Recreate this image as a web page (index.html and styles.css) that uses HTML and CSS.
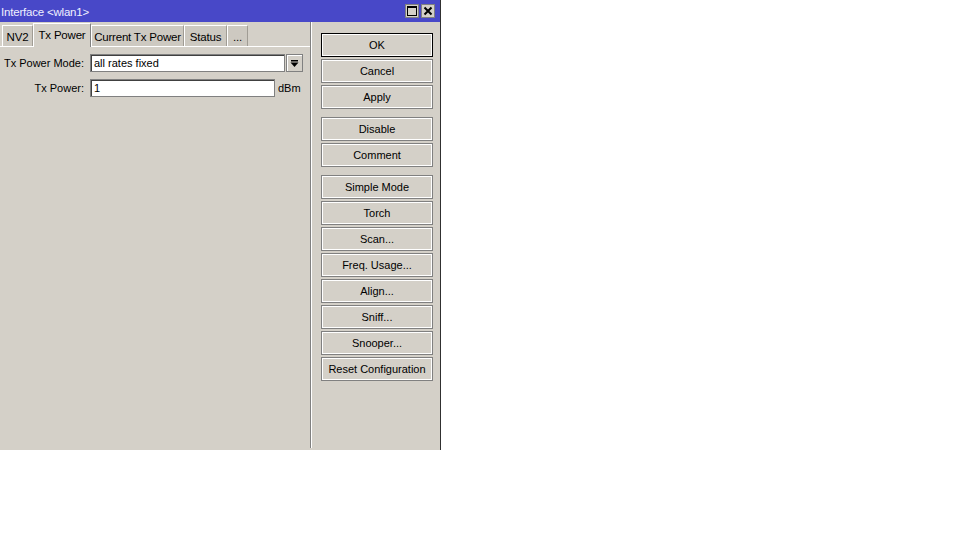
FILE: index.html
```html
<!DOCTYPE html>
<html>
<head>
<meta charset="utf-8">
<link rel="stylesheet" href="styles.css">
</head>
<body>
<div class="window">
  <div class="titlebar">
    <span class="title">Interface &lt;wlan1&gt;</span>
    <div class="tb-buttons">
      <span class="tb-btn"><svg width="10" height="10" viewBox="0 0 10 10"><rect x="0.5" y="0.5" width="9" height="9" fill="none" stroke="#000"/><rect x="0" y="0" width="10" height="2" fill="#000"/></svg></span>
      <span class="tb-btn"><svg width="10" height="10" viewBox="0 0 10 10"><path d="M1.5 1.5 L8.5 8.5 M8.5 1.5 L1.5 8.5" stroke="#000" stroke-width="2"/></svg></span>
    </div>
  </div>
  <div class="body">
    <div class="main">
      <div class="tabs">
        <span class="tab t1">NV2</span>
        <span class="tab t2 active">Tx Power</span>
        <span class="tab t3">Current Tx Power</span>
        <span class="tab t4">Status</span>
        <span class="tab t5">...</span>
      </div>
      <div class="panel">
        <div class="row">
          <span class="label">Tx Power Mode:</span>
          <span class="field wide">all rates fixed</span>
          <span class="dd"><svg width="9" height="9" viewBox="0 0 9 9"><rect x="1" y="1" width="7" height="1.5" fill="#000"/><path d="M0.5 3.5 H8.5 L4.5 8 Z" fill="#000"/></svg></span>
        </div>
        <div class="row">
          <span class="label">Tx Power:</span>
          <span class="field narrow">1</span>
          <span class="unit">dBm</span>
        </div>
      </div>
    </div>
    <div class="side">
      <div class="group">
        <button class="btn default">OK</button>
        <button class="btn">Cancel</button>
        <button class="btn">Apply</button>
      </div>
      <div class="group">
        <button class="btn">Disable</button>
        <button class="btn">Comment</button>
      </div>
      <div class="group">
        <button class="btn">Simple Mode</button>
        <button class="btn">Torch</button>
        <button class="btn">Scan...</button>
        <button class="btn">Freq. Usage...</button>
        <button class="btn">Align...</button>
        <button class="btn">Sniff...</button>
        <button class="btn">Snooper...</button>
        <button class="btn">Reset Configuration</button>
      </div>
    </div>
  </div>
</div>
</body>
</html>
```
FILE: styles.css
```css
html, body {
  margin: 0;
  padding: 0;
  background: #ffffff;
}
body {
  font-family: "Liberation Sans", Arial, sans-serif;
  font-size: 11px;
  color: #000;
  white-space: nowrap;
}
.window {
  width: 440px;
  height: 450px;
  background: #d4d0c8;
  border-right: 1px solid #303030;
  display: flex;
  flex-direction: column;
}
.titlebar {
  height: 22px;
  background: #4848c8;
  display: flex;
  align-items: center;
  justify-content: space-between;
  padding: 0 5px 0 1px;
  flex: none;
}
.title {
  color: #f0f0ff;
  font-size: 11.5px;
  position: relative;
  top: 1px;
  letter-spacing: -0.2px;
}
.tb-buttons {
  display: flex;
  gap: 2px;
}
.tb-btn {
  width: 14px;
  height: 14px;
  background: #d4d0c8;
  border: 1px solid #808080;
  box-sizing: border-box;
  display: flex;
  align-items: center;
  justify-content: center;
}
.body {
  flex: 1;
  display: flex;
}
.main {
  width: 310px;
  border-right: 1px solid #808080;
  box-shadow: 1px 0 0 #ffffff;
  margin-bottom: 2px;
  display: flex;
  flex-direction: column;
}
.tabs {
  display: flex;
  padding: 3px 0 0 2px;
  height: 21px;
  align-items: flex-end;
  border-bottom: 1px solid #ffffff;
}
.tab {
  height: 21px;
  box-sizing: border-box;
  display: flex;
  align-items: center;
  justify-content: center;
  background: #cdc9c1;
  border-left: 1px solid #ffffff;
  border-top: 1px solid #ffffff;
  border-right: 1px solid #a09c94;
  font-size: 11.5px;
  letter-spacing: -0.2px;
  padding-top: 1px;
}
.t1 { width: 31px; }
.t2 { width: 58px; }
.t3 { width: 93px; }
.t4 { width: 43px; }
.t5 { width: 21px; }
.tab.active {
  height: 24px;
  background: #d4d0c8;
  padding-bottom: 3px;
  margin-bottom: -1px;
  border-right: 1px solid #808080;
  position: relative;
}
.panel {
  padding-top: 7px;
  display: flex;
  flex-direction: column;
  gap: 7px;
}
.row {
  display: flex;
  align-items: center;
  height: 18px;
}
.label {
  width: 90px;
  text-align: right;
  padding-right: 6px;
  box-sizing: border-box;
  flex: none;
}
.field {
  height: 18px;
  box-sizing: border-box;
  background: #ffffff;
  border: 1px solid #808080;
  box-shadow: inset 1px 1px 0 #404040;
  padding: 0 3px;
  display: flex;
  align-items: center;
}
.field.wide { width: 195px; }
.field.narrow { width: 185px; }
.dd {
  width: 17px;
  height: 18px;
  box-sizing: border-box;
  margin-left: 1px;
  background: #d4d0c8;
  border: 1px solid #808080;
  box-shadow: inset 1px 1px 0 #ffffff;
  display: flex;
  align-items: center;
  justify-content: center;
}
.unit {
  margin-left: 3px;
}
.side {
  padding: 11px 0 0 10px;
  display: flex;
  flex-direction: column;
  gap: 8px;
}
.group {
  display: flex;
  flex-direction: column;
  gap: 2px;
}
.btn {
  width: 112px;
  height: 24px;
  box-sizing: border-box;
  background: #d4d0c8;
  border: 1px solid #808080;
  box-shadow: inset 1px 1px 0 #ffffff, inset -1px -1px 0 #ffffff;
  font-family: "Liberation Sans", Arial, sans-serif;
  font-size: 11px;
  color: #000;
  padding: 0;
  margin: 0;
}
.btn.default {
  border: 1px solid #000000;
}
```
